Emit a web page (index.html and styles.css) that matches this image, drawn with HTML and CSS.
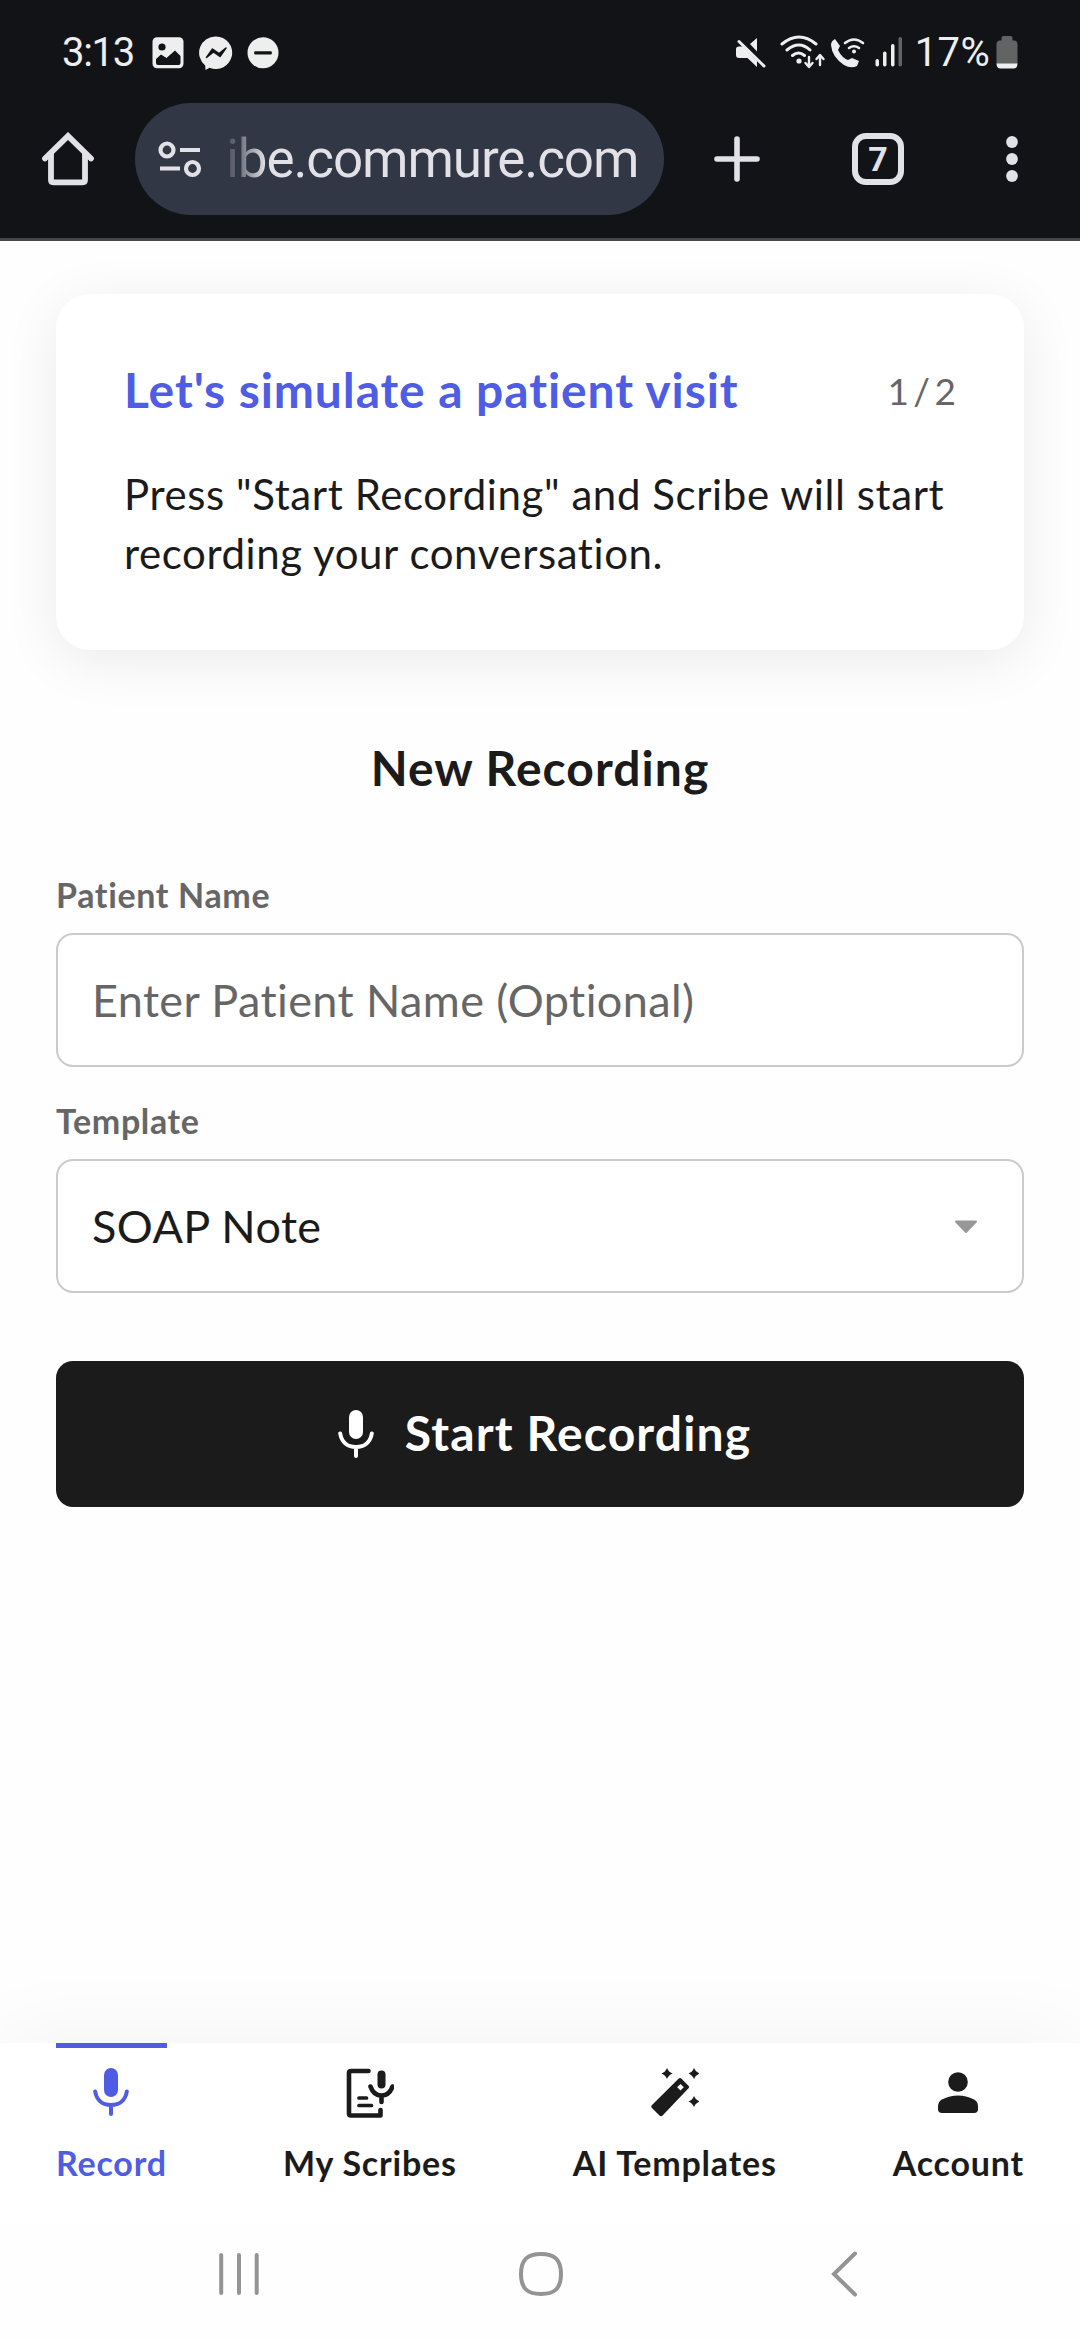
FILE: index.html
```html
<!DOCTYPE html>
<html lang="en">
<head>
<meta charset="utf-8">
<title>Scribe</title>
<link rel="stylesheet" href="styles.css">
</head>
<body>
<div class="phone">
  <header class="chrome">
    <div class="status">
      <div class="status-left">
        <span class="clock">3:13</span>
        <svg class="status-photo" width="32" height="32" viewBox="0 0 32 32"><rect width="31" height="31" x=".5" y=".3" rx="4.5" fill="#eee"/><circle cx="10" cy="10" r="3.6" fill="#121317"/><path d="M4 22l5-4.500 5.500 3.500L23 13.500l5.500 5.500V26q0 2-2 2H6q-2 0-2-2z" fill="#121317"/></svg>
        <svg class="status-msgr" width="34" height="34" viewBox="0 0 34 34"><path d="M17 .5a16.300 16.300 0 1 1-6.500 31.300L6.500 34l-.3-4.500A16.300 16.300 0 0 1 17 .5z" fill="#eee"/><path d="M7.500 21.500l6-8.500 6.500 4.500 7-5.500-6 8.500-6.500-4.500z" fill="#121317" stroke="#121317" stroke-width="1.500" stroke-linejoin="round"/></svg>
        <svg class="status-dnd" width="32" height="32" viewBox="0 0 32 32"><circle cx="16" cy="15.800" r="15.500" fill="#eee"/><rect x="7.200" y="14.300" width="17.600" height="3.200" rx="1" fill="#121317"/></svg>
      </div>
      <div class="status-right">
        <svg class="signals" width="170" height="40" viewBox="0 0 170 40" fill="#eee">
          <g><path d="M21 5v13.500L14 11z"/><path d="M0 16q0-2.500 3-2.500h4L21 28v6L11.500 25H3q-3 0-3-3z"/><path d="M3 8.500L28 33" stroke="#eee" stroke-width="3" stroke-linecap="round"/></g>
          <g fill="none" stroke="#eee" stroke-width="3" stroke-linecap="round"><path d="M46 11q17-14 34 0M51 17q12-10 23 0M56.500 22.500q6-5 12 0"/></g>
          <circle cx="63" cy="28" r="2.600"/>
          <path d="M73 24v9M69.500 30l3.500 4 3.500-4M84 32v-9M80.500 26l3.500-4 3.500 4" fill="none" stroke="#eee" stroke-width="2.400" stroke-linecap="round" stroke-linejoin="round"/>
          <path d="M99 6l5 7-2 4q4 8 10 10l4-2 7 3-2 5q-6 3-13-1-12-8-13-20 0-4 4-6z"/>
          <path d="M109 10q9-7 18 0M113 15q5-3.500 10 0" fill="none" stroke="#eee" stroke-width="2.600" stroke-linecap="round"/><circle cx="118" cy="18.500" r="2"/>
          <rect x="139.500" y="26" width="3.500" height="7.500" rx="1.700"/><rect x="147" y="18.500" width="3.500" height="15" rx="1.700"/><rect x="155" y="11" width="3.500" height="22.500" rx="1.700"/><rect x="162.500" y="4" width="3.500" height="29.500" rx="1.700" fill="#626365"/>
        </svg>
        <span class="percent">17%</span>
        <svg class="battery" width="22" height="33" viewBox="0 0 22 33"><path d="M5.500 4.500V2q0-2 2-2h7q2 0 2 2v2.500h1.500q3.500 0 3.500 4V28H.500V8.500q0-4 3.500-4z" fill="#626365"/><path d="M.5 27.500h21q0 5-4 5h-13q-4 0-4-5z" fill="#eee"/></svg>
      </div>
    </div>
    <div class="toolbar">
      <svg class="home" width="52" height="54" viewBox="0 0 52 54" fill="none" stroke="#e3e1e8" stroke-width="5.800" stroke-linecap="round" stroke-linejoin="round"><path d="M3 26.500L26 4l23 22.500" stroke-linejoin="miter"/><path d="M9 22v26q0 2.300 2.300 2.300h29.400q2.300 0 2.300-2.300V22"/></svg>
      <div class="url">
        <svg width="44" height="38" viewBox="0 0 44 38" fill="none" stroke="#e3e1e8" stroke-width="4.200"><circle cx="9" cy="10" r="6.500"/><path d="M22 10h20M2 28.500h20"/><circle cx="34.500" cy="28.500" r="6.500"/></svg>
        <span class="url-text">ibe.commure.com</span>
      </div>
      <svg class="plus" width="46" height="46" viewBox="0 0 46 46" stroke="#e3e1e8" stroke-width="5.600" stroke-linecap="round"><path d="M23 3v40M3 23h40"/></svg>
      <div class="tabs">7</div>
      <svg class="dots" width="12" height="46" viewBox="0 0 12 46" fill="#e3e1e8"><circle cx="6" cy="6" r="5.900"/><circle cx="6" cy="23" r="5.900"/><circle cx="6" cy="40" r="5.900"/></svg>
    </div>
  </header>

  <main class="content">
    <section class="tour">
      <div class="tour-head"><h2 class="tour-title">Let's simulate a patient visit</h2><span class="tour-step">1 / 2</span></div>
      <p class="tour-text">Press "Start Recording" and Scribe will start recording your conversation.</p>
    </section>
    <h1 class="title">New Recording</h1>
    <div class="label">Patient Name</div>
    <div class="field placeholder">Enter Patient Name (Optional)</div>
    <div class="label">Template</div>
    <div class="field select">SOAP Note
      <svg class="caret" width="24" height="14" viewBox="0 0 24 14"><path d="M2 1.500h20L12 12z" fill="#979797" stroke="#979797" stroke-width="2" stroke-linejoin="round"/></svg>
    </div>
    <button class="start" type="button">
      <svg class="mic" width="36" height="48" viewBox="0 0 36 48"><rect x="11" y="0" width="14" height="29" rx="7" fill="currentColor"/><path d="M2.200 23.500C3.500 32 9.500 37 18 37s14.500-5 15.800-13.500M18 37v9" fill="none" stroke="currentColor" stroke-width="4" stroke-linecap="round"/></svg>
      <span class="start-text">Start Recording</span>
    </button>
  </main>

  <nav class="nav">
    <div class="item active">
      <svg class="mic" width="36" height="48" viewBox="0 0 36 48"><rect x="11" y="0" width="14" height="29" rx="7" fill="currentColor"/><path d="M2.200 23.500C3.500 32 9.500 37 18 37s14.500-5 15.800-13.500M18 37v9" fill="none" stroke="currentColor" stroke-width="4" stroke-linecap="round"/></svg>
      <span>Record</span>
    </div>
    <div class="item">
      <svg width="48" height="50" viewBox="0 0 48 50" fill="none" stroke="currentColor" stroke-width="4.600" stroke-linecap="round" stroke-linejoin="round"><path d="M22.500 3H5q-2 0-2 2v40.500q0 2 2 2h29.500V42"/><path d="M13 30h7.500M13 37.500h12.500" stroke-width="3.700"/><path d="M24.500 18.500q3 9 11 9t11-9M35.500 28v6"/><rect x="31.500" y="2.500" width="8" height="18" rx="4" fill="currentColor" stroke="none"/></svg>
      <span>My Scribes</span>
    </div>
    <div class="item">
      <svg width="48" height="49" viewBox="0 0 48 49" fill="currentColor"><path d="M27.500 10.700q1.500-1.200 3 0l7 7q1.200 1.300 0 2.600L11.600 47.500q-1.600 1.500-3.100 0L1 40q-1.500-1.600 0-3z"/><path d="M29.500 16l3.300 3.300-3.300 3.300-3.300-3.300z" fill="#fff"/><path id="spark" d="M16 0q1.500 4 5.500 5.500Q17.500 7 16 11 14.500 7 10.500 5.500 14.500 4 16 0z"/><use href="#spark" x="27"/><use href="#spark" x="27" y="28"/></svg>
      <span>AI Templates</span>
    </div>
    <div class="item">
      <svg class="person" width="40" height="42" viewBox="0 0 40 42" fill="currentColor"><circle cx="20" cy="10" r="9.800"/><path d="M0 34.500Q0 29.500 4 27.500q8-4 16-4t16 4q4 2 4 7V37q0 4-4 4H4q-4 0-4-4z"/></svg>
      <span>Account</span>
    </div>
  </nav>

  <footer class="system">
    <svg width="40" height="46" viewBox="0 0 40 46" stroke="#949494" stroke-width="4" stroke-linecap="round"><path d="M2.200 4v38M20 4v38M37.700 4v38"/></svg>
    <svg class="sys-home" width="46" height="46" viewBox="0 0 46 46" fill="none" stroke="#949494" stroke-width="4"><path d="M23 3C36 3 43 8 43 23S36 43 23 43 3 38 3 23 10 3 23 3z"/></svg>
    <svg class="sys-back" width="27" height="48" viewBox="0 0 27 48" fill="none" stroke="#949494" stroke-width="4" stroke-linecap="round"><path d="M24 3.500L3 24l21 20.500"/></svg>
  </footer>
</div>
</body>
</html>
```
FILE: styles.css
```css
* { box-sizing: border-box; }
body { margin: 0; background: #fefefe; font-family: Lato, sans-serif; font-variant-ligatures: none; color: #1b1b1b; }
.phone { width: 1080px; height: 2340px; display: flex; flex-direction: column; overflow: hidden; }

.chrome { height: 241px; background: #121317; border-bottom: 3px solid #45464f; flex: none; }
.status { height: 103px; display: flex; justify-content: space-between; align-items: flex-start; padding: 28px 62px 0 62px; color: #eee; font-family: Roboto, sans-serif; font-size: 40px; line-height: 49px; }
.status-left, .status-right { display: flex; align-items: flex-start; }
.clock { width: 90px; letter-spacing: -1.3px; }
.status-photo, .status-dnd { margin-top: 9px; }
.status-msgr { margin: 8px 14px 0 15px; }
.signals { margin-top: 5px; }
.percent { margin: 0 6px 0 9px; letter-spacing: .3px; }
.battery { margin-top: 8px; }

.toolbar { height: 112px; display: flex; align-items: center; padding: 0 62px 0 42px; }
.url { width: 529px; height: 112px; margin-left: 41px; padding-left: 23px; border-radius: 56px; background: #323745; display: flex; align-items: center; }
.url-text { margin-left: 24px; font: 53px/60px Roboto, sans-serif; letter-spacing: -1.1px; background: linear-gradient(90deg, #4d515f 0, #6f727d 14px, #e3e1e8 40px); -webkit-background-clip: text; background-clip: text; color: transparent; }
.plus { margin-left: 50px; }
.tabs { width: 52px; height: 52px; margin-left: 92px; border: 6px solid #e3e1e8; border-radius: 14px; color: #e3e1e8; font: 700 34px/40px Roboto, sans-serif; text-align: center; }
.dots { margin-left: 102px; }

.content { flex: 1; padding: 53px 56px 0; display: flex; flex-direction: column; }
.tour { height: 356px; padding: 66px 68px 0; border-radius: 34px; background: #fff; box-shadow: 0 11px 56px rgba(0, 0, 0, .08); }
.tour-head { display: flex; justify-content: space-between; align-items: center; height: 60px; }
.tour-title { margin: 0; font-size: 48px; line-height: 60px; letter-spacing: .9px; color: #4e5de4; }
.tour-step { font-size: 37px; word-spacing: -5px; color: #666; }
.tour-text { margin: 45px -20px 0 0; font-size: 42px; line-height: 59px; letter-spacing: .59px; }
.title { margin: 88px 0 76px; font-size: 48px; line-height: 60px; letter-spacing: 1.05px; text-align: center; }
.label { font-size: 34px; line-height: 42px; font-weight: 700; letter-spacing: .65px; color: #666; margin-bottom: 17px; }
.field { height: 134px; border: 2px solid #cbcbcb; border-radius: 17px; background: #fff; padding: 0 34px; font-size: 45px; line-height: 130px; letter-spacing: .4px; margin-bottom: 33px; }
.placeholder { color: #666; }
.select { display: flex; justify-content: space-between; align-items: center; padding-right: 44px; }
.caret { margin-top: 2px; }
.start { margin-top: 35px; height: 146px; border: 0; border-radius: 17px; background: #1b1b1b; color: #fff; display: flex; justify-content: center; align-items: center; gap: 31px; padding: 0 0 0 9px; font: 700 48px/60px Lato, sans-serif; letter-spacing: 1.15px; font-variant-ligatures: none; }
.start-text { margin-top: -3px; }

.nav { height: 180px; flex: none; background: #fff; display: flex; justify-content: space-between; padding: 0 56px; box-shadow: 0 0 90px rgba(0, 0, 0, .055); }
.item { display: flex; flex-direction: column; align-items: center; justify-content: space-between; height: 142px; padding-top: 25px; font-size: 34px; font-weight: 700; line-height: 44px; letter-spacing: .8px; }
.item.active { color: #4e5de4; border-top: 5px solid #4e5de4; padding-top: 20px; }
.person { margin-top: 4px; }
.system { height: 117px; flex: none; background: #fefefe; display: flex; align-items: center; padding: 0 0 15px 219px; }
.sys-home { margin-left: 259px; }
.sys-back { margin-left: 267px; }
```
